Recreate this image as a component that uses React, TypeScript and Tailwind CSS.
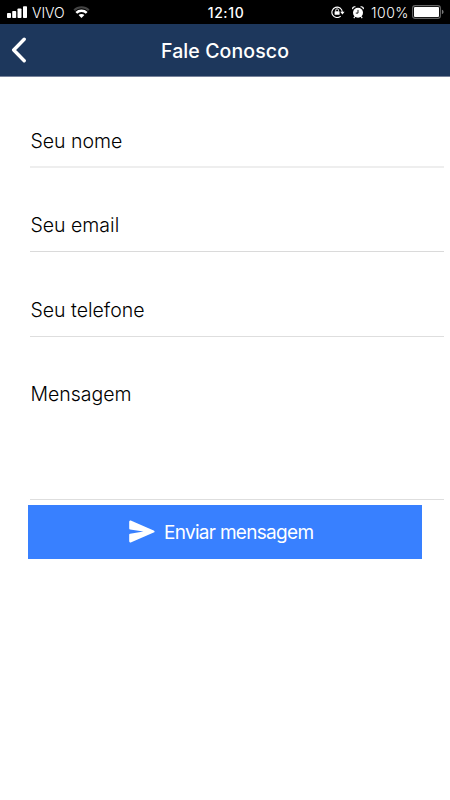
import type { ReactNode } from "react";
import clsx from "clsx";

const FIELDS = [
  { id: "nome", label: "Seu nome", className: "h-[91px] border-b-2 border-[#eeeeee] pt-[50px]" },
  { id: "email", label: "Seu email", className: "h-[84px] border-b border-[#dadada] pt-[43px]" },
  { id: "telefone", label: "Seu telefone", className: "h-[85px] border-b border-[#dedede] pt-[44px]" },
  { id: "mensagem", label: "Mensagem", className: "h-[163px] border-b border-[#dedede] pt-[43px]" },
];

function SignalIcon() {
  return (
    <svg width="20" height="12" viewBox="0 0 20 12" fill="white" aria-hidden="true">
      <rect x="0" y="7" width="4" height="5" rx="0.8" />
      <rect x="5.2" y="5" width="4" height="7" rx="0.8" />
      <rect x="10.5" y="2.5" width="4" height="9.5" rx="0.8" />
      <rect x="16" y="0.2" width="4" height="11.8" rx="0.8" />
    </svg>
  );
}

function WifiIcon() {
  return (
    <svg width="17" height="12" viewBox="0 0 17 12" fill="none" aria-hidden="true">
      <path d="M1.2 4.2C5.2.2 11.8.2 15.8 4.2" stroke="#444" strokeWidth="2.1" />
      <path d="M3.3 6.9c2.8-2.8 7.6-2.8 10.4 0" stroke="white" strokeWidth="2.5" />
      <path d="M8.5 12 5.6 9.1c1.6-1.5 4.2-1.5 5.8 0Z" fill="white" />
    </svg>
  );
}

function RotationLockIcon() {
  return (
    <svg width="14" height="12" viewBox="0 0 14 12" fill="none" aria-hidden="true">
      <path d="M9.7 10.1A5.2 5.2 0 1 1 11.3 6" stroke="white" strokeWidth="1.1" />
      <path d="M9.2 5.8h4.4l-2.2 2.7Z" fill="white" />
      <rect x="3.6" y="5.2" width="5" height="3.6" rx="0.5" fill="white" />
      <path d="M4.7 5.4V4.2a1.4 1.4 0 0 1 2.8 0v1.2" stroke="white" strokeWidth="0.9" />
    </svg>
  );
}

function AlarmIcon() {
  return (
    <svg width="12" height="13" viewBox="0 0 12 13" fill="none" aria-hidden="true">
      <circle cx="6" cy="6.8" r="5" fill="white" />
      <path d="M.7 3.2A2 2 0 0 1 3.4.9M11.3 3.2A2 2 0 0 0 8.6.9" stroke="white" strokeWidth="1.2" />
      <path d="m2.8 10.6-1 1.5M9.2 10.6l1 1.5" stroke="white" strokeWidth="1.1" />
      <path d="M6 3.9v3.2H3.8" stroke="black" strokeWidth="0.9" />
    </svg>
  );
}

function BatteryIcon() {
  return (
    <svg width="32" height="14" viewBox="0 0 32 14" fill="none" aria-hidden="true">
      <rect x="0.6" y="0.6" width="27.8" height="12.8" rx="2.6" stroke="#666" strokeWidth="1.1" />
      <rect x="2" y="2" width="25" height="10" rx="1" fill="white" />
      <path d="M29.9 4.8c2.2.6 2.2 3.8 0 4.4Z" fill="#777" />
    </svg>
  );
}

function StatusBar() {
  return (
    <div className="grid h-6 grid-cols-[1fr_auto_1fr] items-center bg-black pr-[6px] pl-[7px] text-white">
      <div className="flex items-center">
        <SignalIcon />
        <span className="ml-[5px] pt-px text-[14px] leading-[23px] font-light">VIVO</span>
        <span className="ml-[8px]">
          <WifiIcon />
        </span>
      </div>
      <span className="pt-px pl-px text-[14px] leading-[23px] font-medium tracking-[0.6px]">12:10</span>
      <div className="flex items-center justify-end">
        <RotationLockIcon />
        <span className="ml-[7px]">
          <AlarmIcon />
        </span>
        <span className="ml-[7px] pt-px text-[14px] leading-[23px] font-light tracking-[0.5px]">100%</span>
        <span className="ml-[3px]">
          <BatteryIcon />
        </span>
      </div>
    </div>
  );
}

function Header({ children }: { children: ReactNode }) {
  return (
    <header className="grid h-[53px] grid-cols-[1fr_auto_1fr] items-center border-b border-[#77829a] bg-[#1d375c] text-white">
      <button type="button" aria-label="Voltar" className="ml-[11px] w-4">
        <svg width="16" height="26" viewBox="0 0 16 26" fill="none">
          <path
            d="M13.2 2.2 2.7 13l10.5 10.8"
            stroke="white"
            strokeWidth="3.4"
            strokeLinecap="round"
            strokeLinejoin="round"
          />
        </svg>
      </button>
      <h1 className="pt-px text-[19.5px] leading-[50px] font-medium tracking-[0.1px]">{children}</h1>
    </header>
  );
}

export default function App() {
  return (
    <div className="flex h-screen flex-col overflow-hidden bg-white font-['Inter',sans-serif] text-black">
      <StatusBar />
      <Header>Fale Conosco</Header>
      <form className="flex flex-col">
        {FIELDS.map((field) => (
          <div key={field.id} className={clsx("mr-[6px] ml-[30px]", field.className)}>
            <label className="block pl-[0.4px] text-[19.5px] leading-7 font-[350] tracking-[0.01px]">
              {field.label}
            </label>
          </div>
        ))}
        <button
          type="button"
          className="mt-[5px] ml-[28px] flex h-[54px] w-[394px] items-center bg-[#3880ff] pl-[101px] text-white"
        >
          <svg width="26" height="24" viewBox="0 0 26 24" fill="white" aria-hidden="true">
            <path d="M.2 2.1C.2.8 1.2.3 2.3.8L24.7 10.4c1.2.5 1.2 1.7 0 2.2L2.3 22.3c-1.1.5-2.1 0-2.1-1.3v-6.3c0-.6.3-.9.9-1L14.5 11.5 1.1 9.4c-.6-.1-.9-.4-.9-1Z" />
          </svg>
          <span className="ml-[9px] pt-[2px] text-[19px] leading-7 tracking-[-0.7px]">Enviar mensagem</span>
        </button>
      </form>
    </div>
  );
}
